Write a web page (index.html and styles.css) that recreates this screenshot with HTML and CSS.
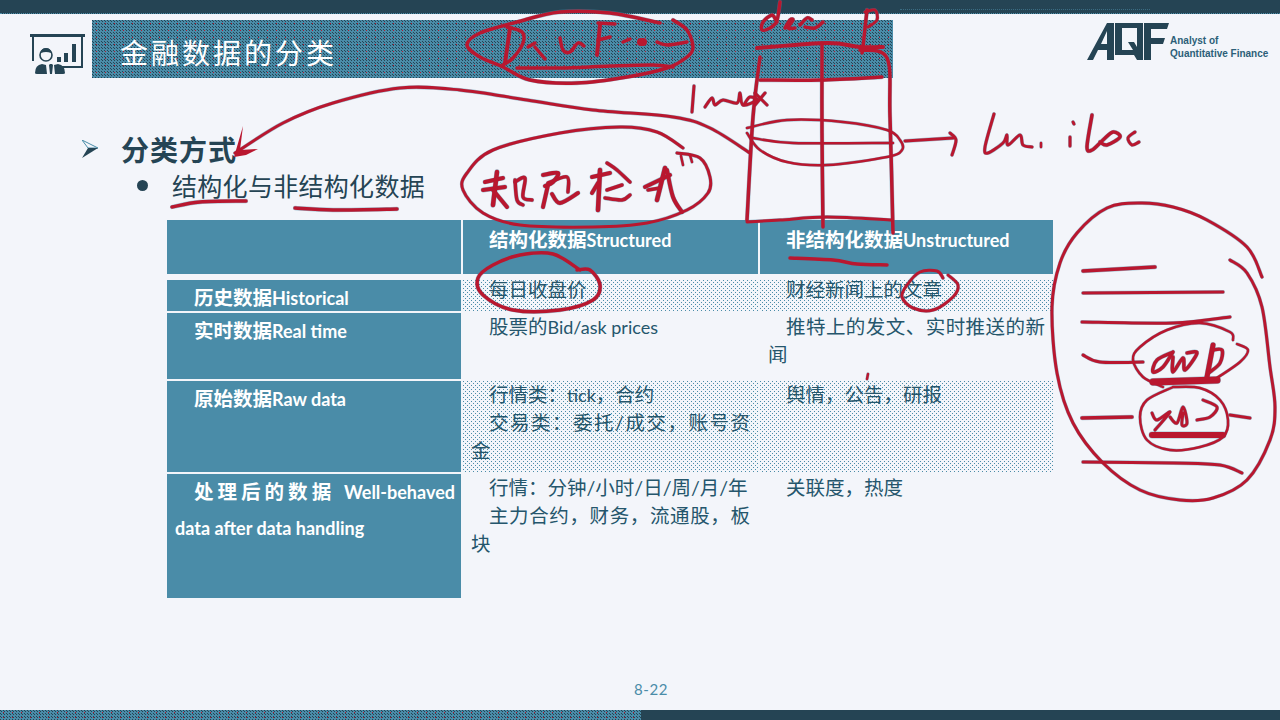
FILE: index.html
```html
<!DOCTYPE html>
<html lang="zh-CN">
<head>
    <meta charset="UTF-8">
    <title>金融数据的分类</title>
    <link rel="stylesheet" href="styles.css">
</head>
<body>
    <div class="top-bar"><span class="top-dots"></span></div>

    <!-- Slide header -->
    <div class="header">
        <svg class="board-icon" width="56" height="42" viewBox="0 0 56 42">
            <g fill="#254454">
                <rect x="0" y="1" width="55" height="3"/>
                <rect x="2" y="4" width="2" height="24"/>
                <rect x="51" y="4" width="2" height="30"/>
                <rect x="32" y="33" width="21" height="2"/>
                <rect x="27" y="24" width="4" height="5"/>
                <rect x="34" y="20" width="4" height="9"/>
                <rect x="42" y="11" width="4" height="18"/>
                <path d="M5 40q0-8 7-9l4 1 1 9H7q-2 0-2-1zM19 32l1-1h2l1 1-1 9h-2zM24 32l4-1q7 1 7 9 0 1-2 1H25z"/>
                <path d="M11 20q0-5 5-5t5 5q-5-2-10 0z"/>
            </g>
            <circle cx="16" cy="22" r="6" fill="none" stroke="#254454" stroke-width="1.6"/>
        </svg>
        <div class="title-bar">金融数据的分类</div>
        <div class="logo">
            <svg width="83" height="38" viewBox="0 0 83 38">
                <path fill="#254454" fill-rule="evenodd" d="M0 37 20 0h7v37h-7V27h-9l-5 10zM20 8l-6 13h6z"/>
                <path fill="#254454" fill-rule="evenodd" d="M28 0h28v37H50l-3-5H28zM35 5v22h11l-5-8h6l3 5V5z"/>
                <path fill="#254454" d="M57 0h25l-2 6H64v9h14l-2 6H64v16h-7z"/>
            </svg>
            <div class="logo-text">Analyst of<br>Quantitative Finance</div>
        </div>
    </div>

    <div class="point">
        <svg class="arrow-bullet" width="16" height="18" viewBox="0 0 16 18">
            <path d="M0 0 16 8 6 8z" fill="#f3f5fa" stroke="#4a8ca8"/>
            <path d="M6 8H16L0 18z" fill="#254454"/>
        </svg>
        <h2>分类方式</h2>
    </div>
    <div class="sub-point">
        <span class="dot"></span>
        <span>结构化与非结构化数据</span>
    </div>

    <!-- Data table -->
    <div class="data-table">
        <div class="cell head"></div>
        <div class="cell head data">结构化数据<span class="en">Structured</span></div>
        <div class="cell head data">非结构化数据<span class="en">Unstructured</span></div>

        <div class="cell side">历史数据<span class="en">Historical</span></div>
        <div class="cell data short dither">每日收盘价</div>
        <div class="cell data short dither">财经新闻上的文章</div>

        <div class="cell side">实时数据<span class="en">Real time</span></div>
        <div class="cell data">股票的<span class="en">Bid/ask prices</span></div>
        <div class="cell data">推特上的发文、实时推送的新闻</div>

        <div class="cell side">原始数据<span class="en">Raw data</span></div>
        <div class="cell data dither">
            <p>行情类：<span class="en">tick</span>，合约</p>
            <p>交易类：委托/成交，账号资金</p>
        </div>
        <div class="cell data dither">舆情，公告，研报</div>

        <div class="cell side">处理后的数据 <span class="en">Well-behaved data after data handling</span></div>
        <div class="cell data">
            <p>行情：分钟/小时/日/周/月/年</p>
            <p>主力合约，财务，流通股，板块</p>
        </div>
        <div class="cell data">关联度，热度</div>
    </div>

    <div class="page-num">8-22</div>
    <div class="bottom-bar"><span class="bottom-left"></span></div>

    <!-- Pen annotations drawn over the slide -->
    <svg class="ink" id="ink" width="1280" height="720" viewBox="0 0 1280 720"></svg>

    <script src="ink.js"></script>
</body>
</html>
```

FILE: styles.css
```css
body {
    margin: 0;
    width: 1280px;
    height: 720px;
    overflow: hidden;
    position: relative;
    display: flex;
    flex-direction: column;
    background-color: #f3f5fa;
    color: #25566c;
    font-family: Lato, "Noto Sans CJK SC", sans-serif;
}
p {
    margin: 0;
    text-indent: 18px;
}
.top-bar {
    height: 14px;
    background-color: #254454;
    border-bottom: 1px dotted #4a8ca8;
    box-sizing: border-box;
    display: flex;
    justify-content: flex-end;
    padding: 9px 130px 0 0;
}
.top-dots {
    width: 250px;
    height: 0;
    border-top: 1px dotted #3a6c82;
}
.header {
    margin-top: 6px;
    height: 58px;
    display: flex;
}
.board-icon {
    margin: 13px 0 0 30px;
    flex: none;
}
.title-bar {
    margin-left: 6px;
    width: 801px;
    padding-left: 28px;
    box-sizing: border-box;
    line-height: 64px;
    height: 58px;
    font-size: 28px;
    letter-spacing: 3px;
    color: #ffffff;
    font-family: "Noto Sans CJK SC", sans-serif;
    background-color: #4a8ca8;
    background-image:
        conic-gradient(at 1px 1px, transparent 75%, #b9172f 0),
        conic-gradient(at 1px 1px, transparent 75%, #254454 0),
        conic-gradient(at 1px 1px, transparent 75%, #254454 0);
    background-size: 9px 7px, 3px 3px, 3px 3px;
    background-position: 4px 3px, 0 0, 1px 1px;
}
.logo {
    margin: 3px 0 0 194px;
    display: flex;
    gap: 0;
}
.logo-text {
    margin-top: 11px;
    font-size: 10px;
    line-height: 13px;
    font-weight: 700;
    white-space: nowrap;
    color: #2c5f78;
    font-family: "Liberation Sans", sans-serif;
}
.point {
    margin-top: 53px;
    padding-left: 82px;
    display: flex;
    align-items: center;
    gap: 23px;
    height: 36px;
}
h2 {
    margin: 0;
    font-size: 28px;
    letter-spacing: 1px;
    font-weight: 700;
    color: #254454;
    font-family: "Noto Sans CJK SC", sans-serif;
}
.sub-point {
    margin-top: 2px;
    padding-left: 137px;
    height: 32px;
    display: flex;
    align-items: center;
    gap: 24px;
    font-size: 25px;
    letter-spacing: 0.3px;
    color: #254454;
    font-family: "Noto Sans CJK SC", sans-serif;
}
.dot {
    width: 11px;
    height: 11px;
    border-radius: 50%;
    background-color: #254454;
}
.data-table {
    margin: 19px 0 0 167px;
    width: 886px;
    display: grid;
    grid-template-columns: 294px 295px 293px;
    grid-template-rows: 58px 31px 66px 91px 124px;
    gap: 2px;
}
.cell {
    padding: 0 8px;
    box-sizing: border-box;
    font-size: 19.5px;
    text-align: justify;
}
.en {
    font-size: 18px;
}
.head {
    height: 54px;
    padding-top: 6px;
    line-height: 28px;
    font-weight: 700;
    background-color: #4a8ca8;
}
.head.data {
    color: #ffffff;
}
.side {
    padding-right: 6px;
    line-height: 36px;
    text-indent: 19px;
    color: #ffffff;
    font-weight: 700;
    background-color: #4a8ca8;
}
.data {
    line-height: 28px;
    text-indent: 18px;
}
.short {
    line-height: 20px;
}
.dither {
    background-image:
        conic-gradient(at 1px 1px, transparent 75%, #4a8ca8 0),
        conic-gradient(at 1px 1px, transparent 75%, #4a8ca8 0);
    background-size: 4px 4px;
    background-position: 0 0, 2px 2px;
}
.page-num {
    margin-top: 82px;
    padding-left: 634px;
    font-size: 15px;
    line-height: 18px;
    letter-spacing: 0.6px;
    color: #4a8ca8;
}
.bottom-bar {
    margin-top: auto;
    height: 10px;
    background-color: #254454;
}
.bottom-left {
    display: block;
    width: 641px;
    height: 10px;
    background-color: #4a8ca8;
    background-image:
        conic-gradient(at 1px 1px, transparent 75%, #b9172f 0),
        conic-gradient(at 1px 1px, transparent 75%, #254454 0),
        conic-gradient(at 1px 1px, transparent 75%, #254454 0);
    background-size: 9px 5px, 3px 3px, 3px 3px;
    background-position: 3px 2px, 0 0, 1px 1px;
}
.ink {
    position: absolute;
    left: 0;
    top: 0;
    pointer-events: none;
}
```

FILE: ink.js
```js
// Pen strokes over the slide: [width, x, y, x, y, ...]
const strokes = [
    // DataFrame ring and scribble
    [3.5, 660,23, 610,13, 560,12, 517,22, 480,33, 467,45, 480,57, 503,67, 530,80, 577,83, 627,77, 667,68, 687,57, 693,47, 687,30, 673,20],
    [3.5, 517,68, 560,68, 610,66, 653,65, 673,67],
    [4, 510,28, 505,63], [3.5, 507,27, 522,32, 523,43, 513,58, 503,65],
    [3.5, 528,47, 535,43], [3.5, 535,47, 545,59],
    [3.5, 560,38, 563,50, 570,52, 578,43, 584,46],
    [3.5, 598,23, 615,24], [4, 600,25, 597,55], [3.5, 598,40, 610,37],
    [3.5, 623,42, 630,39], [8, 641,42, 643,42], [3.5, 657,42, 667,45, 687,42],

    // column sketch
    [3.5, 780,2, 777,20, 772,15, 763,22, 762,30, 770,28, 777,22],
    [3.5, 785,28, 790,20, 793,20, 788,28, 795,28], [3.5, 800,25, 807,18, 812,20], [3.5, 805,27, 815,28, 823,22],
    [3, 865,12, 875,10, 877,20, 868,27], [3.5, 867,10, 863,47, 862,53],
    [4, 757,48, 827,43, 860,47, 883,47],
    [3.5, 760,57, 753,117, 747,220],
    [3.5, 760,80, 820,80, 882,77],
    [3.5, 822,43, 822,133, 823,227],
    [3.5, 860,50, 887,58, 890,117, 893,233],
    [3, 747,222, 780,220, 827,217, 892,220],
    [2.5, 747,128, 787,120, 843,122, 887,130, 900,140, 902,150, 887,157, 827,165, 787,162, 760,150, 747,133],
    [2.5, 753,138, 793,143, 893,143],

    // index
    [3, 694,86, 692,112],
    [3, 705,107, 712,98, 715,105, 723,100, 737,103, 740,93, 743,105, 757,100, 750,97, 745,103],
    [3, 755,93, 767,105], [3, 765,93, 755,105],

    // long arrow
    [3, 235,153, 283,123, 333,103, 400,88, 460,90, 527,100, 593,110, 673,117, 710,128, 750,153],

    // underlines
    [3.5, 172,207, 200,202, 246,201], [3.5, 295,208, 333,210, 397,209],
    [3.5, 790,258, 833,260, 857,264, 887,265],

    // ring round the handwritten note
    [3, 683,148, 657,132, 620,127, 560,133, 493,150, 467,173, 463,190, 483,213, 520,225, 593,227, 647,223, 687,210, 708,193, 710,177, 700,158, 677,153],
    [2.5, 681,156, 683,165], [2.5, 690,155, 692,162],
    [4, 485,182, 503,178], [4, 483,190, 505,187], [4.5, 497,172, 493,205], [4, 493,190, 507,207],
    [3.5, 515,180, 517,200, 523,205], [3.5, 515,182, 525,178, 523,197, 532,200],
    [4, 543,175, 558,173, 553,182, 545,186], [3.5, 548,183, 567,177, 568,192], [4, 548,185, 543,207], [4, 552,194, 560,203, 578,193],
    [4, 592,177, 610,173], [4.5, 600,170, 598,210], [4, 598,183, 592,193],
    [3.5, 607,163, 617,170, 630,182], [3.5, 607,190, 622,185], [3.5, 605,198, 622,200, 630,195],
    [4, 645,187, 670,175], [4.5, 665,168, 657,200], [4, 667,170, 673,197, 682,212], [3.5, 648,190, 660,188],

    // ringed cells
    [3.5, 580,270, 553,254, 520,255, 493,265, 478,278, 483,295, 513,310, 560,310, 593,300, 600,285, 590,270, 577,270],
    [3, 943,278, 937,271, 920,272, 907,285, 902,297, 913,308, 933,310, 953,297, 958,285, 948,275],
    [2.5, 868,374, 867,379],

    // loc, iloc
    [3, 905,141, 953,138], [3, 950,133, 956,140, 952,155],
    [3, 994,114, 985,147, 988,153, 1003,143, 1007,135, 1008,145, 1020,135, 1023,145, 1032,147],
    [2.5, 1041,143, 1041,147], [3, 1070,137, 1070,146], [3, 1073,122, 1074,124],
    [3.5, 1092,115, 1087,147, 1092,150, 1103,140, 1113,132, 1120,137, 1107,145, 1100,142],
    [3, 1135,132, 1128,138, 1132,145, 1139,142],

    // big ring on the right
    [3, 1262,277, 1247,247, 1207,220, 1173,207, 1140,203, 1107,208, 1077,233, 1060,263, 1052,307, 1057,373, 1073,423, 1103,463, 1140,490, 1180,500, 1213,498, 1247,480, 1270,440, 1275,407, 1270,367, 1262,307, 1247,273, 1230,260],
    [3.5, 1083,271, 1155,267], [3, 1083,293, 1223,292], [3, 1082,322, 1173,323, 1230,317],
    [3, 1083,355, 1100,362, 1143,362], [3.5, 1082,418, 1132,417], [3, 1230,415, 1250,418],
    [3, 1083,462, 1173,463, 1220,465, 1242,473],
    [2.5, 1233,340, 1230,332, 1200,323, 1167,330, 1140,347, 1133,360, 1143,377, 1163,387],
    [2.5, 1237,344, 1248,350, 1240,362, 1217,378],
    [7, 1153,382, 1217,380],
    [2.5, 1173,387, 1200,388, 1220,400, 1228,420, 1223,437, 1200,447, 1170,450, 1147,440, 1140,417, 1147,400, 1173,387],
    [6, 1152,435, 1223,435],
    [3.5, 1173,352, 1157,360, 1153,372, 1163,367, 1173,352], [3.5, 1173,357, 1173,372, 1183,358, 1185,370, 1197,353, 1187,353],
    [5, 1213,345, 1207,377], [3.5, 1212,350, 1222,350, 1220,363, 1210,372],
    [3, 1152,413, 1157,420, 1170,412, 1155,430], [3, 1170,417, 1177,423, 1183,407, 1187,423, 1182,425, 1183,413],
    [3, 1197,420, 1210,417, 1217,407, 1203,400]
];

// Arrow head at the end of the long stroke
const arrowHead = 'M243 126 L240 150 L258 149 L246 155 L234 157 Z';

// Catmull-Rom through the points, so the pen lines stay smooth
function smoothPath(pts) {
    let d = `M${pts[0]} ${pts[1]}`;
    const n = pts.length / 2;
    for (let i = 0; i < n - 1; i++) {
        const p = j => {
            const k = Math.max(0, Math.min(n - 1, j));
            return [pts[k * 2], pts[k * 2 + 1]];
        };
        const [x0, y0] = p(i - 1), [x1, y1] = p(i), [x2, y2] = p(i + 1), [x3, y3] = p(i + 2);
        const c1x = x1 + (x2 - x0) / 6, c1y = y1 + (y2 - y0) / 6;
        const c2x = x2 - (x3 - x1) / 6, c2y = y2 - (y3 - y1) / 6;
        d += ` C${c1x.toFixed(1)} ${c1y.toFixed(1)} ${c2x.toFixed(1)} ${c2y.toFixed(1)} ${x2} ${y2}`;
    }
    return d;
}

let fringe = '';
let pen = '';
strokes.forEach(s => {
    const d = smoothPath(s.slice(1));
    fringe += `<path d="${d}" stroke-width="${s[0] + 0.8}"/>`;
    pen += `<path d="${d}" stroke-width="${s[0]}"/>`;
});

document.getElementById('ink').innerHTML =
    `<g fill="none" stroke="#4a8ca8" stroke-opacity="0.5" stroke-linecap="round" stroke-linejoin="round">${fringe}</g>` +
    `<g fill="none" stroke="#b9172f" stroke-linecap="round" stroke-linejoin="round">${pen}</g>` +
    `<path d="${arrowHead}" fill="#b9172f"/>`;
```
